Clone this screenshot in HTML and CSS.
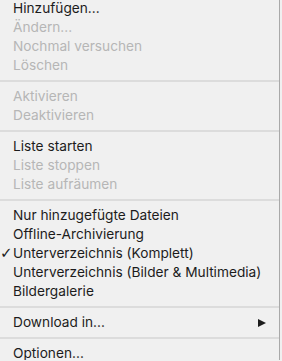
FILE: index.html
```html
<!DOCTYPE html>
<html lang="de">
<head>
    <meta charset="UTF-8">
    <meta name="viewport" content="width=device-width, initial-scale=1.0">
    <title>Menü</title>
    <link rel="stylesheet" href="styles.css">
</head>
<body>
    <div class="menu">
        <div class="item">Hinzufügen...</div>
        <div class="item disabled">Ändern...</div>
        <div class="item disabled">Nochmal versuchen</div>
        <div class="item disabled">Löschen</div>
        <div class="separator"></div>
        <div class="item disabled">Aktivieren</div>
        <div class="item disabled">Deaktivieren</div>
        <div class="separator"></div>
        <div class="item">Liste starten</div>
        <div class="item disabled">Liste stoppen</div>
        <div class="item disabled">Liste aufräumen</div>
        <div class="separator"></div>
        <div class="item">Nur hinzugefügte Dateien</div>
        <div class="item">Offline-Archivierung</div>
        <div class="item checked"><span class="check">✓</span>Unterverzeichnis (Komplett)</div>
        <div class="item">Unterverzeichnis (Bilder &amp; Multimedia)</div>
        <div class="item">Bildergalerie</div>
        <div class="separator"></div>
        <div class="item submenu">Download in...<span class="arrow"></span></div>
        <div class="separator"></div>
        <div class="item">Optionen...</div>
    </div>
</body>
</html>
```

FILE: styles.css
```css
body {
    margin: 0;
    padding: 0;
    overflow: hidden;
    background-color: #f0f0f0;
    font-family: 'Inter', 'Liberation Sans', sans-serif;
    font-size: 13.7px;
    color: #1c1c1c;
}

.menu {
    width: 279px;
    height: 361px;
    margin-top: -1px;
    border-right: 1px solid #a9a9a9;
    background: #f0f0f0;
}

.item {
    position: relative;
    height: 19px;
    line-height: 19px;
    padding-left: 13px;
    white-space: nowrap;
}

.disabled {
    color: #b6b6b6;
}

.check {
    position: absolute;
    left: 0;
    top: 0;
    font-family: 'DejaVu Sans', sans-serif;
    font-size: 15px;
}

.separator {
    height: 2px;
    margin: 5px 0;
    background: #dcdcdc;
}

.submenu {
    display: flex;
    align-items: center;
}

.arrow {
    margin-left: auto;
    margin-right: 13px;
    width: 0;
    height: 0;
    border-top: 4.5px solid transparent;
    border-bottom: 4.5px solid transparent;
    border-left: 8px solid #1c1c1c;
}
```
